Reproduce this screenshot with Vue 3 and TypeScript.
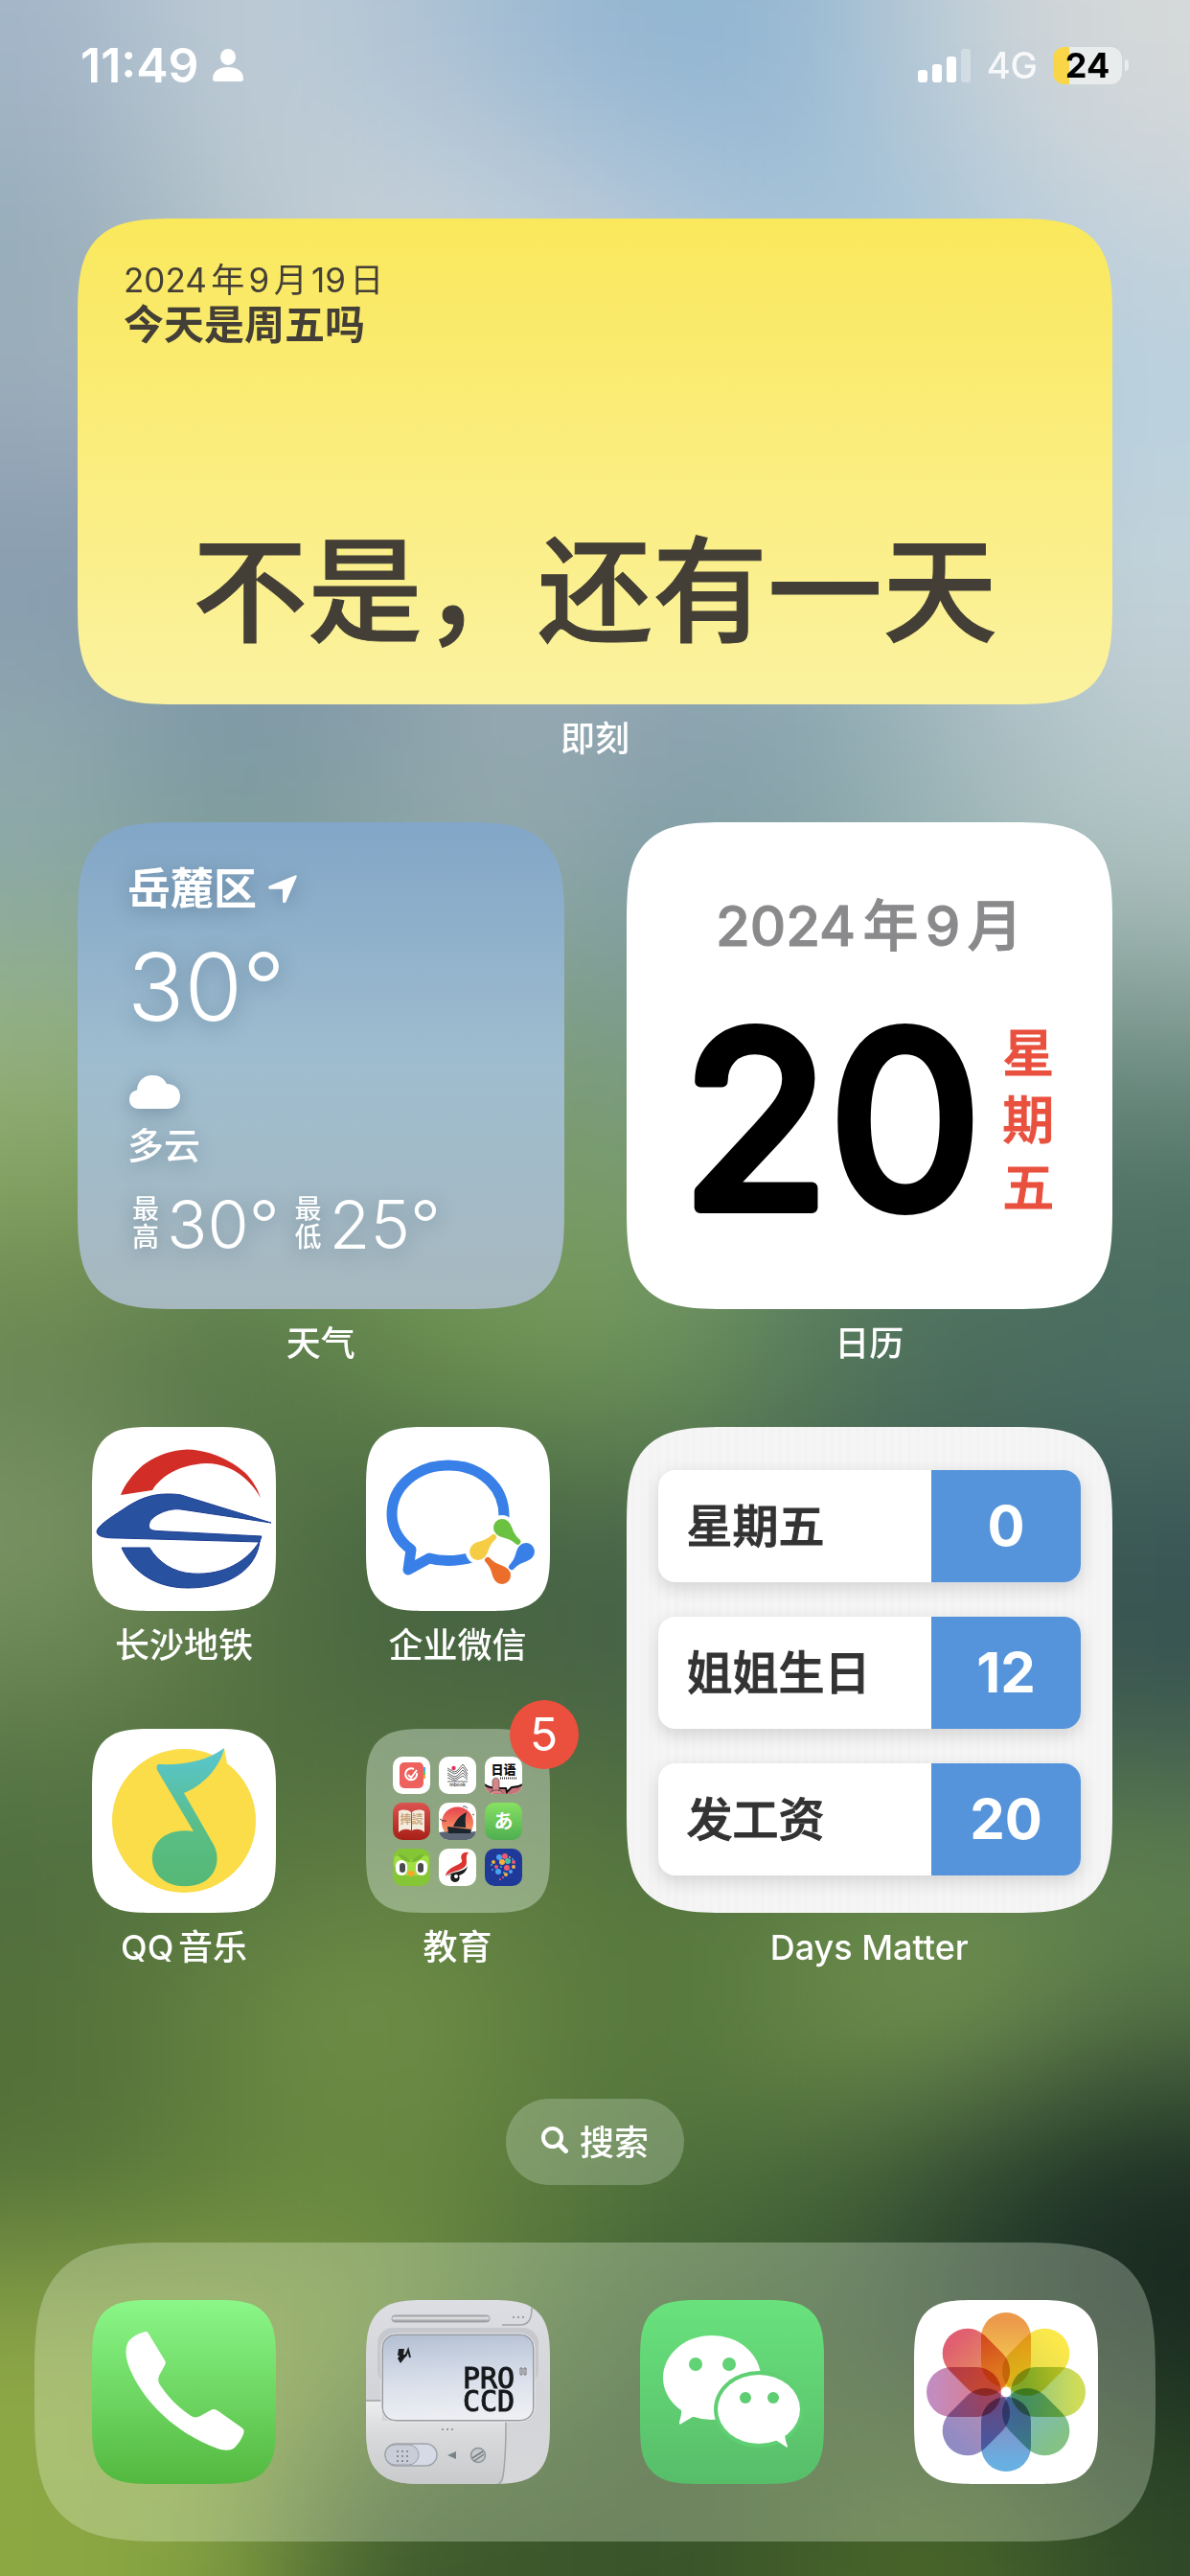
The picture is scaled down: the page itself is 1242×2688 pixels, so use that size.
<script setup lang="ts">
interface Countdown {
  title: string
  days: number
}

const countdowns: Countdown[] = [
  { title: '星期五', days: 0 },
  { title: '姐姐生日', days: 12 },
  { title: '发工资', days: 20 },
]

// Colour samples of the wallpaper, top to bottom; they are blended by a blur.
const wallpaper: string[] = [
  'a3b5c8 c0cdd5 b4c6d6 a0bbd2 8fb3d1 98bad3 c6d0d7 d6d9d9',
  '94abb6 b4c4cc cfd6da c8d3dc b8cadb a0c0d7 abc6da c6d2db',
  '9fafbd a5b6c3 aebfcb b0c0ce b0c4d3 adc6d8 b0cbdb b5d0de',
  '8398ad 8499ab 8c9fae 98a9b6 96a9b8 9fb3bf b0c2ca c7d5dc',
  '92a9b0 7a96a5 859da8 99acb2 8ba1ad 86a4ad a3b9be bccbd0',
  '8aa8a6 7c9b94 8aa5a6 92aaae 7d9ba6 8ba8a8 a0b8b8 adc1bf',
  '97b47e 88a878 7c9c70 7c9c78 7b9b8c 6f9087 6a8c84 769388',
  '7f9e59 6c8f55 6f9458 7a9b62 7a9d68 5d8063 4f7260 476b5d',
  '637f50 527346 64864a 709653 6e9459 55795a 4c6e5e 4f7165',
  '82996b 5d7a4c 46643f 425f44 486548 456250 3f5d55 395655',
  '63814c 55723f 4a6741 4a6643 466148 415c48 3c584f 365150',
  '4d6d40 54733f 5a783f 5e7c40 52733e 59793f 5e8049 61834f',
  '56723a 678642 77984b 638341 55763c 6f904b 7d9d57 587848',
  '4f6d39 5c7b3a 648440 5d7d3d 4f713d 48673a 2b4530 172720',
  '90a948 8da749 7f9c44 557540 3a5c30 3a5732 263c2c 192a20',
  '8ba843 84a142 3f5a2f 3d5829 37512a 445f29 4d6a2b 2f4928',
]

const grid: string[][] = wallpaper.map((row) => row.split(' ').map((c) => '#' + c))

interface Cell {
  x: number
  y: number
  fill: string
}

const clamp = (n: number, max: number): number => Math.min(Math.max(n, 0), max)

const cells: Cell[] = []
for (let y = -2; y < grid.length + 2; y++) {
  for (let x = -2; x < 10; x++) {
    cells.push({ x, y, fill: grid[clamp(y, grid.length - 1)][clamp(x, 7)] })
  }
}

const petals: { angle: number; from: string; to: string }[] = [
  { angle: 0, from: '#eb994b', to: '#f6cf50' },
  { angle: 45, from: '#fbe84b', to: '#e3d94c' },
  { angle: 90, from: '#cfdc58', to: '#92c57f' },
  { angle: 135, from: '#84c285', to: '#7ab8c4' },
  { angle: 180, from: '#68b0e2', to: '#8789c0' },
  { angle: 225, from: '#918bc4', to: '#b58cb4' },
  { angle: 270, from: '#c38cc0', to: '#dc7a86' },
  { angle: 315, from: '#e05f70', to: '#e6935c' },
]

const bubbles: [number, number, number, string][] = [
  [15, 9, 3, '#4aa3f5'], [21, 8, 3, '#ee5a70'], [26, 9, 1, '#f3b13e'], [29, 11, 1, '#49a7f0'],
  [9, 14, 2, '#f3b13e'], [18, 14, 3, '#f3b13e'], [24, 13, 3, '#49c0a4'], [30, 14, 2, '#ee5a70'],
  [7, 17, 1, '#49c0a4'], [12, 19, 2, '#ee5a70'], [17, 19, 1, '#49c0a4'], [23, 20, 3, '#ee5a70'],
  [30, 19, 2, '#f3b13e'], [8, 22, 1, '#4aa3f5'], [14, 24, 3, '#4aa3f5'], [20, 25, 1, '#49c0a4'],
  [27, 24, 2, '#4aa3f5'], [22, 27, 2, '#f3b13e'], [19, 30, 1, '#ee5a70'], [16, 32, 1, '#ee5a70'],
]
</script>

<template>
  <div class="screen" lang="zh-CN">
    <svg class="wallpaper" viewBox="0 0 8 16" preserveAspectRatio="none" aria-hidden="true">
      <defs>
        <filter id="soften" filterUnits="userSpaceOnUse" x="-2" y="-2" width="12" height="20" color-interpolation-filters="sRGB">
          <feGaussianBlur stdDeviation="0.55 0.55" />
        </filter>
      </defs>
      <g filter="url(#soften)" shape-rendering="crispEdges">
        <rect v-for="(c, i) in cells" :key="i" :x="c.x" :y="c.y" width="1" height="1" :fill="c.fill" />
      </g>
    </svg>

    <header class="status">
      <div class="status-left">
        <time class="clock">11:49</time>
        <svg width="32" height="34" viewBox="0 0 32 34" fill="#fff" aria-hidden="true">
          <ellipse cx="16" cy="8.500" rx="8" ry="8.500" />
          <path d="M0 31C0 23 7 19 16 19s16 4 16 12c0 2-1 3-3 3H3c-2 0-3-1-3-3z" />
        </svg>
      </div>
      <div class="status-right">
        <svg width="56" height="36" viewBox="0 0 56 36" fill="#fff" aria-hidden="true">
          <rect x="0" y="23" width="10" height="13" rx="3" />
          <rect x="15" y="17" width="10" height="19" rx="3" />
          <rect x="30" y="9" width="10" height="27" rx="3" />
          <rect x="45" y="1" width="10" height="35" rx="3" opacity=".3" />
        </svg>
        <span class="network">4G</span>
        <span class="battery"><span class="battery-body">24</span></span>
      </div>
    </header>

    <main class="home">
      <figure class="tile wide">
        <section class="widget jike">
          <div>
            <p class="jike-date">2024年9月19日</p>
            <p class="jike-ask">今天是周五吗</p>
          </div>
          <p class="jike-answer">不是，还有一天</p>
        </section>
        <figcaption class="label">即刻</figcaption>
      </figure>

      <figure class="tile">
        <section class="widget weather">
          <h2 class="place">
            岳麓区
            <svg width="30" height="30" viewBox="0 0 30 30" fill="#fff" aria-hidden="true">
              <path d="M28 0.500c1.500-.5 2 .5 1.500 1.800L18.500 28c-.8 1.800-3.500 1.500-3.500-.5V15.500c0-.5-.2-.7-.7-.7H2c-2.200 0-2.500-2.600-.5-3.500z" />
            </svg>
          </h2>
          <p class="now">30°</p>
          <svg class="cloud" width="53" height="35" viewBox="0 0 53 35" fill="#fff" aria-hidden="true">
            <path d="M10 35C4 35 0 31 0 25.500 0 20 3 16.500 8 15.500 8.500 6 15 0 24 0c7 0 12 3 15 9 8 0 14 5 14 13 0 7.500-5 13-13 13z" />
          </svg>
          <p class="condition">多云</p>
          <p class="range">
            <span class="stack">最高</span><span class="deg">30°</span>
            <span class="stack low">最低</span><span class="deg">25°</span>
          </p>
        </section>
        <figcaption class="label">天气</figcaption>
      </figure>

      <figure class="tile">
        <section class="widget calendar">
          <p class="month">2024年9月</p>
          <div class="today">
            <svg class="day" viewBox="0 0 312 330" role="img" aria-label="20">
              <text x="154" y="258" text-anchor="middle">20</text>
            </svg>
            <span class="weekday">星期五</span>
          </div>
        </section>
        <figcaption class="label">日历</figcaption>
      </figure>

      <div class="apps">
        <a class="app" href="#metro">
          <svg class="icon" viewBox="0 0 192 192" aria-hidden="true">
            <rect width="192" height="192" fill="#fff" />
            <path fill="#d22d26" d="M30 71C34 60 42 50 53 40 65 31 82 24 99 23.500 126 24 150 38 162 50 169 58 173 65 176 74 168 60 150 38 119 38 92 39 72 51 63 66z" />
            <path fill="#28529f" stroke="#1c3d94" d="M5 109C6 103 20 94 31 87 48 75 62 70 78 70c6 0 10 0 15 1l94 29-94-14c-14-2-31 7-33 14-2 6 1 8 8 8.500L177 114l-2 6-147-4c-13 0-23-1-23-7z" />
            <path fill="#28529f" stroke="#1c3d94" d="M31 126h29c9 15 25 26 45 27 34 2 58-14 70-34-3 28-30 49-75 49-38 0-60-21-69-42z" />
          </svg>
          <span class="label">长沙地铁</span>
        </a>
        <a class="app" href="#wecom">
          <svg class="icon" viewBox="0 0 192 192" aria-hidden="true">
            <rect width="192" height="192" fill="#fff" />
            <path fill="none" stroke="#3880e8" stroke-width="11" stroke-linejoin="round" d="M144 95C145 62 119 40 86 40 53 40 27 62 27 91c0 15 8 28 20 37l-3 21 22-12c14 4 30 3 45-1" />
            <circle cx="142" cy="105" r="13" fill="#fff" />
            <circle cx="117" cy="130" r="13" fill="#fff" />
            <g fill="#6ac240" transform="translate(142 105) rotate(42)"><path d="M0-9A9 9 0 1 0 0 9C8 9 10 3 22 3a3 3 0 0 0 0-6C10-3 8-9 0-9z" /></g>
            <g fill="#3880e8" transform="translate(167 130) rotate(133)"><path d="M0-9A9 9 0 1 0 0 9C8 9 10 3 22 3a3 3 0 0 0 0-6C10-3 8-9 0-9z" /></g>
            <g fill="#eb6f2b" transform="translate(142 155) rotate(227)"><path d="M0-9A9 9 0 1 0 0 9C8 9 10 3 22 3a3 3 0 0 0 0-6C10-3 8-9 0-9z" /></g>
            <g fill="#f5cd44" transform="translate(117 130) rotate(-43)"><path d="M0-9A9 9 0 1 0 0 9C8 9 10 3 22 3a3 3 0 0 0 0-6C10-3 8-9 0-9z" /></g>
          </svg>
          <span class="label">企业微信</span>
        </a>
        <a class="app" href="#music">
          <svg class="icon" viewBox="0 0 192 192" aria-hidden="true">
            <defs>
              <linearGradient id="note" x1="0" y1="0" x2="0" y2="1">
                <stop offset="0" stop-color="#58c6d2" />
                <stop offset=".6" stop-color="#5abd84" />
                <stop offset="1" stop-color="#55b876" />
              </linearGradient>
            </defs>
            <rect width="192" height="192" fill="#fff" />
            <circle cx="96" cy="96" r="75" fill="#fadd49" />
            <path fill="#fadd49" d="M138 20l3 16-12 4z" />
            <path fill="url(#note)" d="M70 37C95 38 120 34 138 20 134 40 115 60 96 67L127 121C134 134 131 152 116 160 100 168 76 165 67 150 57 132 66 112 86 107.500 93 106 100 106 106 107L68 43C67 39 68 37 70 37z" />
          </svg>
          <span class="label">QQ音乐</span>
        </a>
        <a class="app" href="#education">
          <span class="icon-wrap">
            <span class="icon folder">
              <svg class="mini" viewBox="0 0 39 39" aria-hidden="true">
                <rect width="39" height="39" fill="#fff" />
                <path fill="#4aa3f5" d="M30 11h4v5h-4z" /><path fill="#5cc46c" d="M30 15h4v4h-4z" /><path fill="#f5a13c" d="M30 19h4v4h-4z" />
                <rect x="7" y="6" width="25" height="27" rx="5" fill="#ee625d" />
                <path fill="none" stroke="#fff" stroke-width="2" d="M25 17a6 6 0 1 1-3-4M16 19l3 3 6-8" />
              </svg>
              <svg class="mini" viewBox="0 0 39 39" aria-hidden="true">
                <rect width="39" height="39" fill="#fff" />
                <path fill="none" stroke="#444" stroke-width=".8" d="M9 12l7 4 3-1 6-7 5 7M9 14l7 4 3-1 6-6 5 7M9 17l7 4 3-1 6-6 5 6M9 19l7 4 3-1 6-5 5 5M9 22l8 3 8-5 5 4M9 26h21" />
                <circle cx="15.500" cy="12" r="2.200" fill="#e0355a" />
                <text x="19.500" y="31" class="t-mbook">mbook</text>
              </svg>
              <svg class="mini" viewBox="0 0 39 39" aria-hidden="true">
                <rect width="39" height="39" fill="#fff" />
                <path fill="#c6757a" stroke="#111" stroke-width="2" d="M-2 28c6 5 12 5 24 5l1 4 5-5c6 0 9-1 13-4v13H-2z" />
                <path fill="#d9868a" stroke="#333" stroke-width=".6" d="M8 36V26c0-5 7-5 7 0v10M5 38c3-4 12-4 14 0" />
                <text x="19.500" y="18" class="t-riyu">日语</text>
                <path stroke="#333" stroke-width="2" stroke-dasharray="1 1" d="M16 22.500h17" />
              </svg>
              <svg class="mini" viewBox="0 0 39 39" aria-hidden="true">
                <defs><linearGradient id="book" x1="0" y1="0" x2="0" y2="1"><stop stop-color="#dc5450" /><stop offset="1" stop-color="#a81f17" /></linearGradient></defs>
                <rect width="39" height="39" fill="url(#book)" />
                <path fill="#f3ebdc" d="M6 9c4-2 9-2 13 1v19c-4-2-9-2-13 2zM20 10c4-3 9-3 13-1v22c-4-4-9-4-13-2z" />
                <text x="19.500" y="22" class="t-book">捧読</text>
              </svg>
              <svg class="mini" viewBox="0 0 39 39" aria-hidden="true">
                <defs><linearGradient id="sun" x1="0" y1="0" x2="0" y2="1"><stop stop-color="#e8434d" /><stop offset="1" stop-color="#fbae6c" /></linearGradient></defs>
                <rect width="39" height="39" fill="#fff" />
                <circle cx="19.500" cy="21" r="16.500" fill="url(#sun)" />
                <path fill="#5b6472" d="M0 31c12-2 26 1 39-1v9H0z" />
                <path fill="#1c242c" d="M9 25l25 3-1 4H10zM15 25c3-7 7-12 14-15-2 6-1 10-1 16z" />
                <path fill="none" stroke="#222" stroke-width=".8" d="M1 17l3 2 4 0M25 4l3 0 2 2M35 12l2 1" />
              </svg>
              <svg class="mini" viewBox="0 0 39 39" aria-hidden="true">
                <defs><linearGradient id="kana" x1="0" y1="0" x2="0" y2="1"><stop stop-color="#86e163" /><stop offset="1" stop-color="#4fae50" /></linearGradient></defs>
                <rect width="39" height="39" fill="url(#kana)" />
                <text x="19.500" y="27" class="t-kana">あ</text>
              </svg>
              <svg class="mini" viewBox="0 0 39 39" aria-hidden="true">
                <rect width="39" height="39" fill="#85c636" />
                <path fill="#a1de42" d="M2 8c5-2 9 0 10 3 4 1 11 1 15 0 1-3 5-5 10-3 2 8 0 16-6 20H8C2 24 0 16 2 8z" />
                <path fill="#76b82f" d="M5 6c6 0 10 3 14 8 4-5 8-8 14-8-4 6-9 8-14 8S9 12 5 6z" />
                <rect x="3" y="12" width="12" height="16" rx="6" fill="#fff" /><rect x="24" y="12" width="12" height="16" rx="6" fill="#fff" />
                <rect x="7" y="15" width="6" height="10" rx="3" fill="#4b4b4b" /><rect x="26" y="15" width="6" height="10" rx="3" fill="#4b4b4b" />
                <path fill="#f7a62b" d="M15 26c0-4 8-4 8 0l-4 4z" />
              </svg>
              <svg class="mini" viewBox="0 0 39 39" aria-hidden="true">
                <rect width="39" height="39" fill="#fff" />
                <path fill="#db3431" d="M31 4c-7-1-9 4-7 8 2 5-16 6-17 17 6-7 22-5 22-15 0-4-1-7 2-10z" />
                <path fill="#1c1c1c" d="M8 29c6-6 19-4 22-11-1 6-5 9-9 10 2 4-1 7-4 7-4 0-6-4-4-8-2 0-4 1-5 2z" />
                <circle cx="18" cy="29" r="2" fill="#fff" />
              </svg>
              <svg class="mini" viewBox="0 0 39 39" aria-hidden="true">
                <rect width="39" height="39" fill="#1f3998" />
                <circle v-for="(b, i) in bubbles" :key="i" :cx="b[0]" :cy="b[1]" :r="b[2]" :fill="b[3]" />
              </svg>
            </span>
            <span class="badge">5</span>
          </span>
          <span class="label">教育</span>
        </a>
      </div>

      <figure class="tile">
        <section class="widget days">
          <ul class="day-list">
            <li v-for="c in countdowns" :key="c.title" class="day-row">
              <span class="day-title">{{ c.title }}</span>
              <span class="day-count">{{ c.days }}</span>
            </li>
          </ul>
        </section>
        <figcaption class="label">Days Matter</figcaption>
      </figure>
    </main>

    <button class="search" type="button">
      <svg width="28" height="28" viewBox="0 0 28 28" fill="none" stroke="#fff" stroke-width="4" aria-hidden="true">
        <circle cx="11.500" cy="11.500" r="9.500" />
        <path d="M18.500 18.500l7 7" stroke-width="5" stroke-linecap="round" />
      </svg>
      搜索
    </button>

    <nav class="dock">
      <a href="#phone" aria-label="电话">
        <svg class="icon" viewBox="0 0 192 192">
          <defs><linearGradient id="phone" x1="0" y1="0" x2="0" y2="1"><stop stop-color="#8bf788" /><stop offset="1" stop-color="#53b83f" /></linearGradient></defs>
          <rect width="192" height="192" fill="url(#phone)" />
          <path fill="#fff" d="M54 33.500c2-1 4-.5 5 1.500l17 28c1 2 1 3 0 5l-6 11c-1 3-1 5 0 8 8 13 20 25 32 33 4 3 7 3 11 1l11-6c3-2 5-1 8 1l24 17c3 2 3 4 2 7-2 5-5 10-9 14-5 4-12 3-18 1C85 138 51 103 38 68c-3-9-4-19 1-26 4-4 9-7 15-8.500z" />
        </svg>
      </a>
      <a href="#camera" aria-label="相机">
        <svg class="icon" viewBox="0 0 192 192">
          <defs>
            <linearGradient id="case" x1="0" y1="0" x2="0" y2="1"><stop stop-color="#dcdee3" /><stop offset=".5" stop-color="#d3d4d7" /><stop offset="1" stop-color="#d6d7d9" /></linearGradient>
            <linearGradient id="lcd" x1="0.2" y1="0" x2="0.3" y2="1"><stop stop-color="#b4c0d3" /><stop offset=".5" stop-color="#d6dde9" /><stop offset="1" stop-color="#eeeff3" /></linearGradient>
            <linearGradient id="panel" x1="0" y1="0" x2="0" y2="1"><stop stop-color="#ededee" /><stop offset=".4" stop-color="#d9dadc" /><stop offset="1" stop-color="#c9cacc" /></linearGradient>
            <linearGradient id="bar" x1="0" y1="0" x2="0" y2="1"><stop stop-color="#8e9095" /><stop offset=".4" stop-color="#e8e8ea" /><stop offset="1" stop-color="#85878b" /></linearGradient>
          </defs>
          <rect width="192" height="192" fill="url(#case)" />
          <rect x="12" y="29" width="168" height="60" rx="16" fill="#bfc1c4" opacity=".7" />
          <path fill="url(#panel)" d="M0 106h17v20h129c0 24-1 46-3 58-1 5-3 8-6 8H0z" />
          <path fill="none" stroke="#a2a4a7" stroke-width="1.500" d="M0 105h17M146 126c0 24-1 46-3 58-1 5-3 8-6 8M142 26h18c10 0 13-6 13-18" />
          <rect x="27" y="16" width="102" height="7" rx="3" fill="url(#bar)" stroke="#a5a7ab" />
          <rect x="17" y="36" width="158" height="90" rx="14" fill="url(#lcd)" stroke="#989ca2" stroke-width="2" />
          <rect x="16" y="35" width="160" height="92" rx="15" fill="none" stroke="#e9eaec" stroke-width="1" />
          <path fill="#1a1c1f" d="M34 51h6l-1 6h4l-7 9-3-5 2-3h-2z" />
          <path fill="none" stroke="#1a1c1f" stroke-width="2" d="M41 59l3-7 2 8" />
          <text x="101" y="92" class="t-ccd">PRO</text>
          <text x="101" y="116" class="t-ccd">CCD</text>
          <path fill="none" stroke="#777" d="M161 71h2v7h-2zM165 71h2v7h-2z" />
          <path stroke="#999b9e" stroke-width="2" stroke-dasharray="2 3" d="M79 135h12M153 18h12" />
          <rect x="20" y="150" width="54" height="23" rx="11.500" fill="#d6dae6" stroke="#a0a3a9" stroke-width="1.500" />
          <rect x="20" y="151" width="35" height="21" rx="10.500" fill="#c9cdd8" stroke="#9b9ea6" />
          <path stroke="#8a8d93" stroke-width="2" stroke-dasharray="2 3" d="M32 158h12M32 163h12M32 168h12" />
          <path fill="#75858a" d="M85 162l9-4v8z" />
          <circle cx="117" cy="162" r="7.500" fill="#c4c9cc" stroke="#8d9396" stroke-width="1.500" />
          <path stroke="#757b7e" stroke-width="1.500" d="M111 165l11-7M113 168l10-7" />
        </svg>
      </a>
      <a href="#wechat" aria-label="微信">
        <svg class="icon" viewBox="0 0 192 192">
          <defs><linearGradient id="wechat" x1="0" y1="0" x2="0" y2="1"><stop stop-color="#69e27d" /><stop offset="1" stop-color="#57bd69" /></linearGradient></defs>
          <rect width="192" height="192" fill="url(#wechat)" />
          <ellipse cx="75" cy="81" rx="51" ry="44" fill="#fff" />
          <path fill="#fff" d="M43 112c1 6-1 11-2 16 0 2 1 2 2 1l12-7c3-1 6 0 10 1z" />
          <ellipse cx="58" cy="67" rx="7" ry="7" fill="#61d275" /><ellipse cx="93" cy="67" rx="7" ry="7" fill="#61d275" />
          <ellipse cx="124" cy="114" rx="47" ry="40" fill="#60cf73" />
          <ellipse cx="124" cy="114" rx="43" ry="36" fill="#fff" />
          <path fill="#fff" d="M152 139c-2 5 1 9 2 14 0 1-1 1-2 0l-9-6c-3-1-6 0-9 1z" />
          <circle cx="110" cy="102" r="6" fill="#5fcd72" /><circle cx="139" cy="102" r="6" fill="#5fcd72" />
        </svg>
      </a>
      <a href="#photos" aria-label="照片">
        <svg class="icon" viewBox="0 0 192 192">
          <defs>
            <linearGradient v-for="p in petals" :id="'petal' + p.angle" :key="p.angle" x1="0" y1="0" x2="0" y2="1">
              <stop offset=".1" :stop-color="p.from" /><stop offset=".8" :stop-color="p.to" />
            </linearGradient>
          </defs>
          <rect width="192" height="192" fill="#fff" />
          <rect
            v-for="p in petals" :key="p.angle" class="petal" x="70" y="13" width="52" height="78" rx="26"
            :fill="`url(#petal${p.angle})`" :transform="`rotate(${p.angle} 96 96)`"
          />
          <circle cx="96" cy="96" r="5" fill="#fff" />
        </svg>
      </a>
    </nav>
  </div>
</template>

<style>
body {
  margin: 0;
}
</style>

<style scoped>
.screen {
  position: relative;
  display: flex;
  flex-direction: column;
  min-height: 100vh;
  overflow: hidden;
  box-sizing: border-box;
  padding-bottom: 36px;
  color: #fff;
  font-family: Inter, "Noto Sans CJK SC", sans-serif;
  text-autospace: normal;
  isolation: isolate;
}
.screen p,
.screen h2,
.screen figure,
.screen ul {
  margin: 0;
  padding: 0;
}
.screen a {
  color: inherit;
  text-decoration: none;
}
.wallpaper {
  position: absolute;
  inset: 0;
  width: 100%;
  height: 100%;
  z-index: -1;
}

/* status bar */
.status {
  display: flex;
  justify-content: space-between;
  padding: 40px 64px 132px 84px;
}
.status-left,
.status-right {
  display: flex;
  align-items: center;
  height: 56px;
}
.status-left {
  gap: 14px;
}
.clock {
  font-size: 50px;
  font-weight: 600;
}
.network {
  margin: 0 16px;
  font-size: 38px;
  font-weight: 500;
  opacity: .85;
}
.battery {
  display: flex;
  align-items: center;
  gap: 3px;
}
.battery::after {
  content: "";
  width: 4px;
  height: 12px;
  border-radius: 0 4px 4px 0;
  background: rgba(255, 255, 255, .5);
}
.battery-body {
  width: 72px;
  border-radius: 12px;
  background: linear-gradient(90deg, #f8d648 24%, #e9ecec 24%);
  color: #000;
  font-size: 36px;
  font-weight: 700;
  line-height: 39px;
  text-align: center;
}

/* grid */
.home {
  display: grid;
  grid-template-columns: 1fr 1fr;
  gap: 65px;
  padding: 0 81px;
}
.tile {
  min-width: 0;
}
.wide {
  grid-column: 1 / -1;
}
.widget {
  box-sizing: border-box;
  aspect-ratio: 1;
  border-radius: 72px;
  overflow: hidden;
}
.label {
  display: block;
  margin-top: 14px;
  font-size: 36px;
  font-weight: 500;
  line-height: 44px;
  text-align: center;
  white-space: nowrap;
}

.jike {
  display: flex;
  flex-direction: column;
  justify-content: space-between;
  aspect-ratio: 1080 / 507;
  padding: 40px 48px 46px;
  background: linear-gradient(#fae85c, #fbf2a0);
  color: #433f36;
}
.jike-date {
  font-size: 35px;
  line-height: 48px;
}
.jike-ask {
  font-size: 42px;
  font-weight: 600;
  line-height: 46px;
}
.jike-answer {
  font-family: "Noto Sans CJK SC", sans-serif;
  font-size: 120px;
  font-weight: 500;
  line-height: 160px;
  text-align: center;
  -webkit-text-stroke: 1px currentColor;
}

.weather {
  padding: 42px 52px;
  background: linear-gradient(#82a6c7, #9fbdcf 50%, #a7b8bf);
  text-shadow: 0 4px 20px rgba(40, 70, 90, .35);
}
.weather svg {
  filter: drop-shadow(0 4px 10px rgba(40, 70, 90, .35));
}
.place {
  display: flex;
  align-items: center;
  gap: 12px;
  font-size: 45px;
  font-weight: 600;
  line-height: 56px;
}
.now {
  font-size: 98px;
  font-weight: 300;
  line-height: 148px;
}
.cloud {
  display: block;
  margin: 18px 0 16px 2px;
}
.condition {
  font-size: 38px;
  font-weight: 500;
  line-height: 44px;
}
.weather .range {
  display: flex;
  align-items: center;
  height: 80px;
  margin-top: 20px;
  padding-left: 5px;
}
.stack {
  width: 28px;
  margin-right: 8px;
  font-size: 28px;
  font-weight: 500;
  line-height: 29px;
}
.low {
  margin-left: 16px;
}
.deg {
  font-size: 70px;
  font-weight: 300;
}

.calendar {
  display: flex;
  flex-direction: column;
  align-items: center;
  padding-top: 72px;
  background: #fff;
}
.month {
  color: #8a8a8c;
  font-size: 58px;
  font-weight: 500;
  line-height: 72px;
  -webkit-text-stroke: 1px currentColor;
}
.today {
  display: flex;
  align-items: center;
  gap: 20px;
}
.day {
  width: 312px;
  height: 330px;
}
.day text {
  font-size: 252px;
  font-weight: 400;
  fill: #000;
  stroke: #000;
  stroke-width: 12px;
  stroke-linejoin: round;
}
.weekday {
  width: 54px;
  padding-top: 6px;
  color: #e9503e;
  font-size: 54px;
  font-weight: 500;
  line-height: 70px;
  -webkit-text-stroke: 1px currentColor;
}

/* apps */
.apps {
  display: grid;
  grid-template-columns: auto auto;
  justify-content: space-between;
  align-content: space-between;
  padding: 0 15px;
}
.app {
  width: 192px;
}
.icon {
  display: block;
  width: 192px;
  height: 192px;
  border-radius: 43px;
  overflow: hidden;
}
.icon-wrap {
  position: relative;
  display: block;
}
.folder {
  display: grid;
  grid-template-columns: repeat(3, 39px);
  gap: 9px;
  place-content: center;
  background: rgba(226, 240, 226, .4);
}
.mini {
  width: 39px;
  height: 39px;
  border-radius: 10px;
}
.badge {
  position: absolute;
  top: -30px;
  right: -30px;
  width: 72px;
  border-radius: 36px;
  background: #eb4f3d;
  font-size: 48px;
  line-height: 72px;
  text-align: center;
}
.mini text {
  text-anchor: middle;
}
.t-mbook {
  font-size: 5px;
  font-weight: 600;
  fill: #444;
}
.t-riyu {
  font-size: 13px;
  font-weight: 900;
  fill: #111;
}
.t-book {
  font-size: 12px;
  font-weight: 700;
  fill: #c9a57c;
}
.t-kana {
  font-size: 20px;
  font-weight: 700;
  fill: #fff;
}

.days {
  padding: 45px 33px 39px;
  background: repeating-linear-gradient(90deg, #f5f5f5 0 5px, #f3f3f3 5px 9px);
}
.day-list {
  display: flex;
  flex-direction: column;
  justify-content: space-between;
  height: 100%;
  list-style: none;
}
.day-row {
  display: flex;
  height: 117px;
  border-radius: 18px;
  background: #fff;
  box-shadow: 0 6px 18px rgba(0, 0, 0, .14);
  overflow: hidden;
  line-height: 117px;
}
.day-title {
  flex: 1;
  padding-left: 30px;
  color: #333;
  font-size: 48px;
  font-weight: 500;
  -webkit-text-stroke: 1px currentColor;
}
.day-count {
  width: 156px;
  background: #5594da;
  font-size: 58px;
  font-weight: 700;
  text-align: center;
}

.search {
  display: flex;
  align-items: center;
  justify-content: center;
  gap: 12px;
  align-self: center;
  width: 186px;
  height: 90px;
  margin: auto 0 60px;
  padding: 0 0 4px;
  border: 0;
  border-radius: 45px;
  background: rgba(226, 240, 226, .26);
  color: #fff;
  font: inherit;
  font-size: 36px;
  font-weight: 500;
}

.dock {
  display: flex;
  justify-content: space-between;
  margin: 0 36px;
  padding: 60px;
  border-radius: 96px;
  background: rgba(244, 255, 232, .28);
}
.petal {
  mix-blend-mode: multiply;
}
.t-ccd {
  font-family: "DejaVu Sans Mono", monospace;
  font-size: 30px;
  fill: #16181a;
  stroke: #16181a;
  stroke-width: 1px;
}

/* continuous corners where the browser can draw them */
@supports (corner-shape: superellipse(1.7)) {
  .widget,
  .icon,
  .dock {
    corner-shape: superellipse(1.7);
  }
  .widget {
    border-radius: 108px;
  }
  .icon {
    border-radius: 66px;
  }
  .dock {
    border-radius: 146px;
  }
}
</style>
